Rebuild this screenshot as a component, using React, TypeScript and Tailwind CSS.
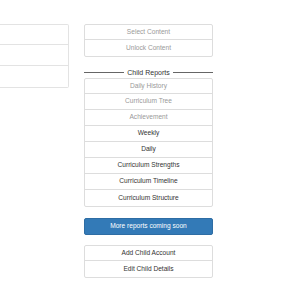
import React from 'react'

const topItems = [
  { label: 'Select Content', muted: true },
  { label: 'Unlock Content', muted: true },
]

const reports = [
  { label: 'Daily History', muted: true },
  { label: 'Curriculum Tree', muted: true },
  { label: 'Achievement', muted: true },
  { label: 'Weekly', muted: false },
  { label: 'Daily', muted: false },
  { label: 'Curriculum Strengths', muted: false },
  { label: 'Curriculum Timeline', muted: false },
  { label: 'Curriculum Structure', muted: false },
]

const accountItems = ['Add Child Account', 'Edit Child Details']

function ListGroup({ items }: { items: { label: string; muted: boolean }[] }) {
  return (
    <div className="border border-[#dddddd] rounded-[2px] divide-y divide-[#dddddd]">
      {items.map((item) => (
        <div
          key={item.label}
          className={`h-[16px] first:h-[15px] flex items-center justify-center ${item.muted ? 'text-[#999999]' : 'text-[#333333]'}`}
        >
          {item.label}
        </div>
      ))}
    </div>
  )
}

export default function App() {
  return (
    <div className="w-[300px] h-[300px] bg-white overflow-hidden font-['Liberation_Sans',Arial,sans-serif] text-[6.6px] leading-none">
      <div className="flex items-start pt-[24px]">
        {/* Left panel, cut off at the window edge */}
        <div className="w-[69px] border border-l-0 border-[#e3e3e3] rounded-r-[2px] divide-y divide-[#e3e3e3]">
          <div className="h-[20px]" />
          <div className="h-[21px]" />
          <div className="h-[21px]" />
        </div>

        {/* Right column */}
        <div className="ml-[15px] w-[129px] flex flex-col">
          <ListGroup items={topItems} />

          <div className="mt-[10px] h-[10px] flex items-center gap-[3px] text-[#333333]">
            <div className="flex-1 h-px bg-[#666666]" />
            <span className="text-[7px]">Child Reports</span>
            <div className="flex-1 h-px bg-[#666666]" />
          </div>

          <div className="mt-[1px]">
            <ListGroup items={reports} />
          </div>

          <button className="mt-[11px] h-[17px] rounded-[2px] bg-[#337ab7] border border-[#2e6da4] text-white text-[6.6px]">
            More reports coming soon
          </button>

          <div className="mt-[10px]">
            <ListGroup items={accountItems.map((label) => ({ label, muted: false }))} />
          </div>
        </div>
      </div>
    </div>
  )
}
